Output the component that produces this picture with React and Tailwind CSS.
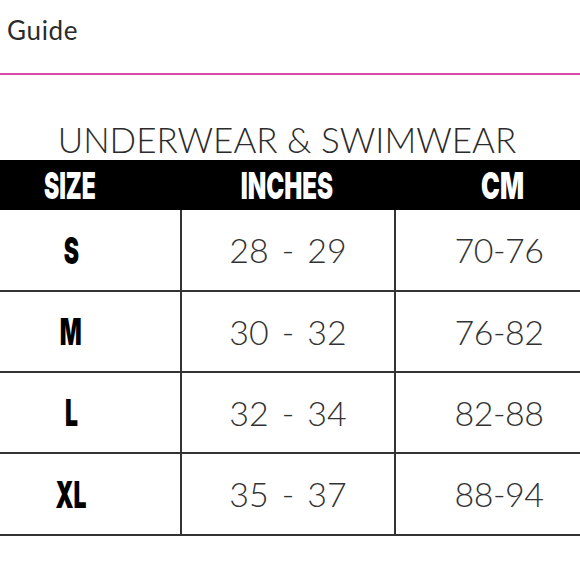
const rows = [
  { size: 'S', lo: '28', hi: '29', cm: '70-76', h: 'h-[82px]' },
  { size: 'M', lo: '30', hi: '32', cm: '76-82', h: 'h-[81px]' },
  { size: 'L', lo: '32', hi: '34', cm: '82-88', h: 'h-[81px]' },
  { size: 'XL', lo: '35', hi: '37', cm: '88-94', h: 'h-[82px]' }
];

const thin = { fontFamily: 'Lato, "Liberation Sans", sans-serif' };
const heavy = { fontFamily: 'Inter, "Liberation Sans", sans-serif' };

const App = () => {
  return (
    <div className="w-[580px] h-[580px] bg-white overflow-hidden">
      {/* Top bar */}
      <div className="h-[73px] px-[7px] pt-[17px]">
        <span className="text-[26px] leading-none tracking-[0.7px] text-[#2b2b2b] block" style={thin}>Guide</span>
      </div>
      <div className="h-[2px] bg-[#d84aa6]" />

      {/* Chart title */}
      <div className="mt-[44px] h-[41px] flex items-center justify-center pr-[6px]">
        <h1 className="text-[35px] font-light text-[#2b2b2b] leading-none" style={thin}>
          UNDERWEAR &amp; SWIMWEAR
        </h1>
      </div>

      {/* Table */}
      <div className="grid grid-cols-[180px_214px_1fr]">
        <div className="h-[50px] bg-black flex items-center justify-center pr-[40px]">
          <span className="text-white text-[37px] font-black leading-none scale-x-[0.62]" style={heavy}>SIZE</span>
        </div>
        <div className="h-[50px] bg-black flex items-center justify-center">
          <span className="text-white text-[37px] font-black leading-none scale-x-[0.65]" style={heavy}>INCHES</span>
        </div>
        <div className="h-[50px] bg-black flex items-center justify-center pl-[32px]">
          <span className="text-white text-[37px] font-black leading-none scale-x-[0.68]" style={heavy}>CM</span>
        </div>

        {rows.map((r) => (
          <div key={r.size} className="contents">
            <div className={`${r.h} border-b-2 border-[#333] flex items-center justify-center pr-[38px]`}>
              <span className="text-[37px] font-black text-black leading-none scale-x-[0.62]" style={heavy}>{r.size}</span>
            </div>
            <div className={`${r.h} border-b-2 border-l-2 border-[#333] flex items-center justify-center gap-[13px] text-[34px] font-light text-[#333] leading-none`} style={thin}>
              <span>{r.lo}</span>
              <span>-</span>
              <span>{r.hi}</span>
            </div>
            <div className={`${r.h} border-b-2 border-l-2 border-[#333] flex items-center justify-center pl-[22px]`}>
              <span className="text-[34px] font-light text-[#333] leading-none tracking-[-0.5px]" style={thin}>{r.cm}</span>
            </div>
          </div>
        ))}
      </div>
    </div>
  );
};

export default App;
